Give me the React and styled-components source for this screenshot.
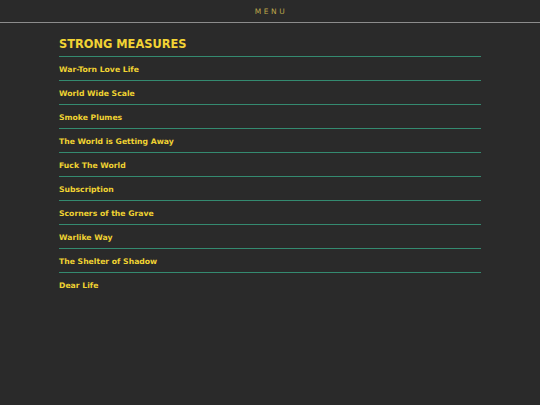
import React from 'react'
import styled, { createGlobalStyle } from 'styled-components'

const Global = createGlobalStyle`
  html, body {
    margin: 0;
    padding: 0;
    background: #2a2a2a;
    font-family: "DejaVu Sans", Verdana, sans-serif;
  }
`

const songs = [
  'War-Torn Love Life',
  'World Wide Scale',
  'Smoke Plumes',
  'The World is Getting Away',
  'Fuck The World',
  'Subscription',
  'Scorners of the Grave',
  'Warlike Way',
  'The Shelter of Shadow',
  'Dear Life',
]

const App = () => {
  return (
    <Page>
      <Global />
      <Header>MENU</Header>
      <Content>
        <Title>STRONG MEASURES</Title>
        <List>
          {songs.map((s) => (
            <Item key={s}>{s}</Item>
          ))}
        </List>
      </Content>
    </Page>
  )
}

const Page = styled.div`
  min-height: 405px;
  background: #2a2a2a;
`

const Header = styled.div`
  height: 22px;
  border-bottom: 1px solid #8c8c8c;
  display: flex;
  align-items: center;
  justify-content: center;
  font-size: 7.5px;
  letter-spacing: 2.6px;
  color: #bba64a;
  padding-left: 2px;
`

const Content = styled.div`
  width: 422px;
  margin: 0 auto;
  padding-top: 12px;
`

const Title = styled.h1`
  margin: 0;
  font-size: 11.4px;
  font-weight: bold;
  line-height: 19px;
  color: #f2d334;
  padding-bottom: 2px;
  border-bottom: 1px solid #348a70;
`

const List = styled.ul`
  list-style: none;
  margin: 0;
  padding: 0;
`

const Item = styled.li`
  font-size: 7.7px;
  font-weight: bold;
  line-height: 23px;
  padding-top: 1px;
  height: 22px;
  color: #f0d332;
  border-bottom: 1px solid #348a70;

  &:last-child {
    border-bottom: none;
  }
`

export default App
